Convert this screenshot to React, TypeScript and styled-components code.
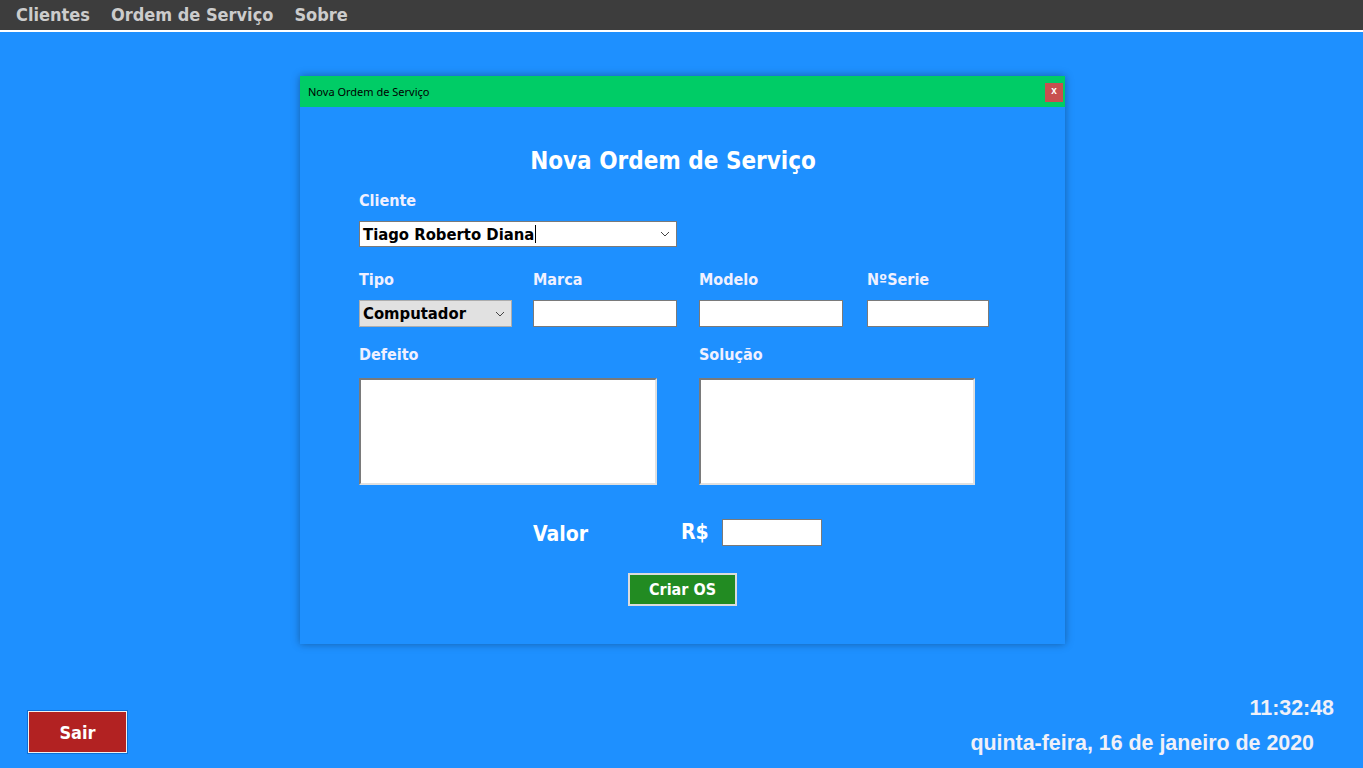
import React from "react";
import styled, { createGlobalStyle } from "styled-components";

const GlobalStyle = createGlobalStyle`
  html, body {
    margin: 0;
    padding: 0;
    background: #1e90ff;
  }
  * {
    box-sizing: border-box;
  }
`;

const tahoma = `"DejaVu Sans Condensed", "DejaVu Sans", sans-serif`;

const Page = styled.div`
  min-height: 100vh;
  display: flex;
  flex-direction: column;
  background: #1e90ff;
  font-family: ${tahoma};
  font-stretch: condensed;
`;

const MenuBar = styled.nav`
  height: 32px;
  background: #3d3d3d;
  border-bottom: 2px solid #ffffff;
  display: flex;
  align-items: center;
  gap: 21px;
  padding: 0 16px 1px;
`;

const MenuItem = styled.span`
  color: #cccccc;
  font-weight: bold;
  font-size: 18px;
  cursor: pointer;
`;

const Main = styled.main`
  display: flex;
  justify-content: center;
  padding-top: 44px;
  padding-left: 2px;
`;

const Dialog = styled.div`
  width: 765px;
  height: 568px;
  background: #1e90ff;
  box-shadow: 0 0 8px rgba(0, 0, 0, 0.35);
  display: flex;
  flex-direction: column;
`;

const TitleBar = styled.div`
  height: 31px;
  background: #00cc66;
  display: flex;
  align-items: center;
  justify-content: space-between;
  padding: 0 2px 0 8px;
`;

const TitleText = styled.span`
  font-family: "Noto Sans", sans-serif;
  font-size: 11px;
  color: #000;
  font-stretch: normal;
`;

const CloseButton = styled.button`
  width: 18px;
  height: 19px;
  margin-top: 2px;
  border: none;
  background: #c8504f;
  color: #fff;
  font-family: "Liberation Sans", sans-serif;
  font-size: 10px;
  font-weight: bold;
  padding: 0 0 3px;
  line-height: 1;
`;

const Form = styled.div`
  padding: 40px 0 0 59px;
  display: flex;
  flex-direction: column;
`;

const Heading = styled.h1`
  margin: 0 0 16px;
  padding-right: 78px;
  text-align: center;
  color: #ffffff;
  font-size: 24px;
  font-weight: bold;
  line-height: 28px;
`;

const Label = styled.label`
  display: block;
  color: #f0f0ff;
  font-size: 16px;
  font-weight: bold;
  line-height: 20px;
`;

const Field = styled.div`
  display: flex;
  flex-direction: column;
  gap: 10px;
`;

const SelectBox = styled.div<{ $width: number; $gray?: boolean }>`
  width: ${(p) => p.$width}px;
  height: ${(p) => (p.$gray ? 27 : 26)}px;
  background: ${(p) => (p.$gray ? "#e1e1e1" : "#ffffff")};
  border: 1px solid ${(p) => (p.$gray ? "#adadad" : "#7a7a7a")};
  display: flex;
  align-items: center;
  justify-content: space-between;
  padding: 0 6px 0 3px;
  color: #000;
  font-size: 16.5px;
  font-weight: bold;
`;

const Caret = styled.span`
  display: flex;
  align-items: center;
  color: #555;
`;

const Cursor = styled.span`
  display: inline-block;
  width: 1px;
  height: 18px;
  background: #000;
  margin-left: 1px;
  vertical-align: -3px;
`;

const TextInput = styled.input<{ $width: number }>`
  width: ${(p) => p.$width}px;
  height: 27px;
  border: 1px solid #7a7a7a;
  background: #fff;
  padding: 0 4px;
  font-family: ${tahoma};
  font-size: 16px;
  outline: none;
`;

const Row = styled.div`
  display: grid;
  grid-template-columns: 174px 166px 168px 1fr;
  margin-top: 23px;
`;

const AreaRow = styled.div`
  display: grid;
  grid-template-columns: 340px 1fr;
  margin-top: 18px;
`;

const TextArea = styled.textarea<{ $width: number }>`
  width: ${(p) => p.$width}px;
  height: 107px;
  resize: none;
  background: #fff;
  border-style: solid;
  border-width: 2px;
  border-color: #7a7a7a #e0e0e0 #e0e0e0 #7a7a7a;
  outline: none;
  margin-top: 3px;
`;

const ValorRow = styled.div`
  display: flex;
  align-items: center;
  margin-top: 33px;
  padding-left: 174px;
`;

const BigLabel = styled.span<{ $width?: number }>`
  color: #fff;
  font-size: 21px;
  font-weight: bold;
  width: ${(p) => (p.$width ? `${p.$width}px` : "auto")};
  margin-top: ${(p) => (p.$width ? "4px" : "0")};
`;

const Actions = styled.div`
  display: flex;
  padding-left: 269px;
  margin-top: 27px;
`;

const GreenButton = styled.button`
  width: 109px;
  height: 33px;
  background: #228b22;
  border: 2px solid #dcdcdc;
  color: #fff;
  font-family: ${tahoma};
  font-stretch: condensed;
  font-size: 16px;
  font-weight: bold;
  padding: 0;
`;

const Footer = styled.footer`
  margin-top: auto;
  display: flex;
  justify-content: space-between;
  align-items: flex-end;
  padding: 0 29px 12px 28px;
`;

const ExitButton = styled.button`
  width: 99px;
  height: 42px;
  background: #b22222;
  border: 1px solid #f0f0f0;
  outline: 1px solid #0b6fd6;
  color: #fff;
  font-family: ${tahoma};
  font-stretch: condensed;
  font-size: 18px;
  font-weight: bold;
  margin-bottom: 3px;
`;

const Clock = styled.div`
  display: flex;
  flex-direction: column;
  align-items: flex-end;
  gap: 10px;
  font-family: "Liberation Sans", Arial, sans-serif;
  font-weight: bold;
  font-size: 21.4px;
  color: #f0f0f8;
  font-stretch: normal;
`;

const DateText = styled.span`
  margin-right: 20px;
`;

const ChevronDown = () => (
  <svg width="10" height="6" viewBox="0 0 10 6" fill="none">
    <path d="M1 1l4 4 4-4" stroke="#444" strokeWidth="1" />
  </svg>
);

export default function App() {
  return (
    <>
      <GlobalStyle />
      <Page>
        <MenuBar>
          <MenuItem>Clientes</MenuItem>
          <MenuItem>Ordem de Serviço</MenuItem>
          <MenuItem>Sobre</MenuItem>
        </MenuBar>
        <Main>
          <Dialog>
            <TitleBar>
              <TitleText>Nova Ordem de Serviço</TitleText>
              <CloseButton>x</CloseButton>
            </TitleBar>
            <Form>
              <Heading>Nova Ordem de Serviço</Heading>
              <Field>
                <Label>Cliente</Label>
                <SelectBox $width={318}>
                  <span>
                    Tiago Roberto Diana
                    <Cursor />
                  </span>
                  <Caret>
                    <ChevronDown />
                  </Caret>
                </SelectBox>
              </Field>
              <Row>
                <Field>
                  <Label>Tipo</Label>
                  <SelectBox $width={153} $gray>
                    <span>Computador</span>
                    <Caret>
                      <ChevronDown />
                    </Caret>
                  </SelectBox>
                </Field>
                <Field>
                  <Label>Marca</Label>
                  <TextInput $width={144} />
                </Field>
                <Field>
                  <Label>Modelo</Label>
                  <TextInput $width={144} />
                </Field>
                <Field>
                  <Label>NºSerie</Label>
                  <TextInput $width={122} />
                </Field>
              </Row>
              <AreaRow>
                <Field>
                  <Label>Defeito</Label>
                  <TextArea $width={298} />
                </Field>
                <Field>
                  <Label>Solução</Label>
                  <TextArea $width={276} />
                </Field>
              </AreaRow>
              <ValorRow>
                <BigLabel $width={148}>Valor</BigLabel>
                <BigLabel>R$</BigLabel>
                <TextInput $width={100} style={{ marginLeft: 13 }} />
              </ValorRow>
              <Actions>
                <GreenButton>Criar OS</GreenButton>
              </Actions>
            </Form>
          </Dialog>
        </Main>
        <Footer>
          <ExitButton>Sair</ExitButton>
          <Clock>
            <span>11:32:48</span>
            <DateText>quinta-feira, 16 de janeiro de 2020</DateText>
          </Clock>
        </Footer>
      </Page>
    </>
  );
}
